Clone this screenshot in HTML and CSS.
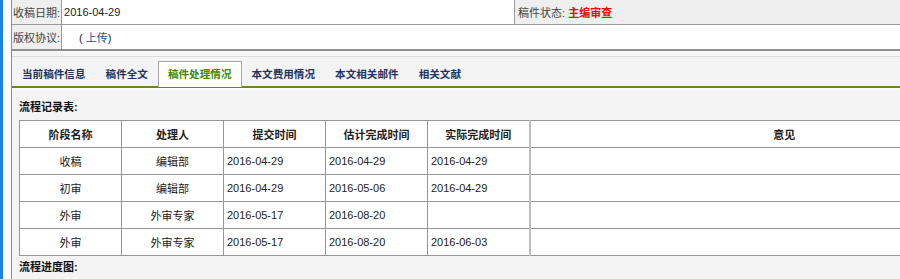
FILE: index.html
```html
<!DOCTYPE html>
<html lang="zh-CN">
<head>
  <meta charset="UTF-8">
  <title>稿件处理情况</title>
  <link rel="stylesheet" href="styles.css">
</head>
<body>

<div class="shell">
  <div class="edge"></div>

  <div class="page">
    <table class="info">
      <tr>
        <th class="label">收稿日期:</th>
        <td class="val">2016-04-29</td>
        <th class="status">稿件状态: <span class="red">主编审查</span></th>
      </tr>
      <tr>
        <th class="label">版权协议:</th>
        <td class="val upload" colspan="2">( <a href="#">上传</a>)</td>
      </tr>
    </table>

    <div class="tabs">
      <ul class="tab-list">
        <li class="tab">当前稿件信息</li>
        <li class="tab">稿件全文</li>
        <li class="tab active">稿件处理情况</li>
        <li class="tab">本文费用情况</li>
        <li class="tab">本文相关邮件</li>
        <li class="tab">相关文献</li>
      </ul>
    </div>

    <div class="panel">
      <h3 class="caption">流程记录表:</h3>
      <table class="flow">
        <colgroup>
          <col class="c"><col class="c"><col class="c"><col class="c"><col class="c"><col class="wide">
        </colgroup>
        <thead>
          <tr>
            <th>阶段名称</th>
            <th>处理人</th>
            <th>提交时间</th>
            <th>估计完成时间</th>
            <th>实际完成时间</th>
            <th>意见</th>
          </tr>
        </thead>
        <tbody>
          <tr>
            <td class="mid">收稿</td>
            <td class="mid">编辑部</td>
            <td>2016-04-29</td>
            <td>2016-04-29</td>
            <td>2016-04-29</td>
            <td></td>
          </tr>
          <tr>
            <td class="mid">初审</td>
            <td class="mid">编辑部</td>
            <td>2016-04-29</td>
            <td>2016-05-06</td>
            <td>2016-04-29</td>
            <td></td>
          </tr>
          <tr>
            <td class="mid">外审</td>
            <td class="mid">外审专家</td>
            <td>2016-05-17</td>
            <td>2016-08-20</td>
            <td></td>
            <td></td>
          </tr>
          <tr>
            <td class="mid">外审</td>
            <td class="mid">外审专家</td>
            <td>2016-05-17</td>
            <td>2016-08-20</td>
            <td>2016-06-03</td>
            <td></td>
          </tr>
        </tbody>
      </table>
      <h3 class="caption next">流程进度图:</h3>
    </div>
  </div>
</div>

</body>
</html>
```

FILE: styles.css
```css
/* page frame */
html, body { margin: 0; padding: 0; }
body {
  background: #fff;
  overflow: hidden;
  font-family: "Liberation Sans", "Noto Sans CJK SC", sans-serif;
  font-size: 11px;
  color: #222;
}
.shell { display: flex; width: 1100px; min-height: 279px; }
.edge { width: 3px; background: #1b84e2; flex: none; }
.page {
  margin-left: 8px;
  border-left: 1px solid #8e8e8e;
  flex: 1;
  background: #f4f4f4;
}

/* top info */
.info {
  width: 100%;
  border-collapse: collapse;
  background: #fff;
  border-bottom: 2px solid #8e8e8e;
}
.info th, .info td {
  border: 1px solid #9a9a9a;
  height: 24px;
  padding: 0 2px;
  text-align: left;
  white-space: nowrap;
}
.info tr:first-child th, .info tr:first-child td { border-top: 0; }
.info th { font-weight: normal; color: #444; background: #efefef; }
.info .label { width: 47px; padding: 0 1px; border-left: 0; }
.info .val { width: 448px; }
.info .status { border-right: 0; padding-left: 3px; }
.info .upload { padding-left: 17px; border-right: 0; }
.info .upload a { color: #1d4e8f; text-decoration: none; }
.red { color: #f00; font-weight: bold; }

/* tabs */
.tabs {
  margin-top: 5px;
  border-top: 1px solid #dcdcdc;
  background: #f4f4f4;
  border-bottom: 2px solid #6a871f;
  padding-top: 4px;
}
.tab-list { list-style: none; margin: 0; padding: 0; display: flex; }
.tab {
  padding: 0 9px;
  height: 24px;
  line-height: 24px;
  border: 1px solid transparent;
  border-bottom: 0;
  font-size: 10.6px;
  font-weight: bold;
  color: #1f3563;
  margin-bottom: -1px;
}
.tab.active {
  background: #fff;
  border-color: #a9a9a9;
  color: #3d8a08;
  height: 25px;
}

/* flow record */
.panel {
  padding: 9px 0 0 7px;
  border-top: 2px solid #fbfbfb;
}
.caption {
  margin: 0;
  font-size: 11px;
  line-height: 16px;
  font-weight: bold;
  color: #111;
}
.caption.next { margin-top: 3px; }
.flow {
  margin-top: 5px;
  width: 1020px;
  table-layout: fixed;
  border-collapse: collapse;
  background: #fff;
}
.flow col.c { width: 102px; }
.flow th, .flow td {
  border: 1px solid #969696;
  height: 26px;
  padding: 0 3px;
  text-align: left;
  white-space: nowrap;
}
.flow th { text-align: center; font-weight: bold; color: #222; }
.flow td.mid { text-align: center; }
.flow th:last-child, .flow td:last-child { border-left: 2px solid #bdbdbd; }
```
